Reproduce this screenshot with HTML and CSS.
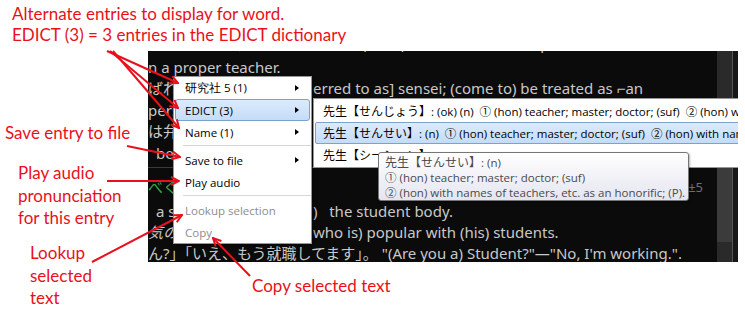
FILE: index.html
```html
<!DOCTYPE html>
<html lang="en">
  <head>
    <meta charset="UTF-8" />
    <meta name="viewport" content="width=device-width, initial-scale=1.0" />
    <title>Popup menu notes</title>
    <link rel="stylesheet" href="styles.css">
  </head>
  <body>
    <div class="page">
      <!-- callouts -->
      <div class="note note-alt">Alternate entries to display for word.<br>EDICT (3) = 3 entries in the EDICT dictionary</div>
      <div class="note note-save">Save entry to file</div>
      <div class="note note-play">Play audio<br>pronunciation<br>for this entry</div>
      <div class="note note-lookup">Lookup<br>selected<br>text</div>
      <div class="note note-copy">Copy selected text</div>

      <!-- screenshot of the reader window -->
      <div class="shot">
        <div class="panel">
          <div class="lines">
            <div class="row row-top full">ことになった先生と呼ばれる人 (were) a teacher; one's superior</div>
            <div class="row full">n a proper teacher.</div>
            <div class="row"><span>ばれる</span><span>erred to as] sensei; (come to) be treated as ⌐an</span></div>
            <div class="row"><span>person</span><span></span></div>
            <div class="row"><span>は弁護士</span><span></span></div>
            <div class="row"><span class="indent">be</span><span></span></div>
            <div class="sep"></div>
            <div class="row row-head"><span class="green">べく</span><span class="count">±5</span></div>
            <div class="row row-low"><span class="indent">a s</span><span>)&nbsp;&nbsp; the student body.</span></div>
            <div class="row row-low"><span class="slant">気のある</span><span>who is) popular with (his) students.</span></div>
            <div class="row row-low full">ん?」「いえ、もう就職してます」。 "(Are you a) Student?"—"No, I'm working.".</div>
          </div>
          <div class="scrollbar"><div class="thumb"></div></div>
          <div class="edge"></div>
        </div>

        <div class="menu">
          <div class="item"><span>研究社 5 (1)</span><i class="tri"></i></div>
          <div class="item active"><span>EDICT (3)</span><i class="tri"></i></div>
          <div class="item"><span>Name (1)</span><i class="tri"></i></div>
          <div class="divider"></div>
          <div class="item"><span>Save to file</span><i class="tri"></i></div>
          <div class="item"><span>Play audio</span></div>
          <div class="divider"></div>
          <div class="item off"><span>Lookup selection</span></div>
          <div class="item off"><span>Copy</span></div>
        </div>

        <div class="submenu">
          <div class="sub-item"><span class="jp">先生【せんじょう】</span>: (ok) (n)&nbsp; ① (hon) teacher; master; doctor; (suf)&nbsp; ② (hon) with names of teachers</div>
          <div class="sub-item active"><span class="jp">先生【せんせい】</span>: (n)&nbsp; ① (hon) teacher; master; doctor; (suf)&nbsp; ② (hon) with names of teachers</div>
          <div class="sub-item"><span class="jp">先生【シーシェン】</span>: (n) (Chinese) Mr.; teacher</div>
        </div>

        <div class="tooltip">
          <div><span class="jp">先生【せんせい】</span>: (n)</div>
          <div>① (hon) teacher; master; doctor; (suf)</div>
          <div>② (hon) with names of teachers, etc. as an honorific; (P).</div>
        </div>
      </div>

      <svg class="arrows" width="745" height="309" viewBox="0 0 745 309">
        <defs>
          <marker id="head" viewBox="0 0 10 10" refX="9" refY="5" markerWidth="10" markerHeight="10" markerUnits="userSpaceOnUse" orient="auto">
            <path d="M1,1 L9,5 L1,9" fill="none" stroke="#e8111b" stroke-width="2" />
          </marker>
        </defs>
        <g stroke="#e8111b" stroke-width="2" fill="none" marker-end="url(#head)">
          <line x1="107" y1="51" x2="178" y2="83" />
          <line x1="110" y1="51" x2="178" y2="108" />
          <line x1="113" y1="51" x2="179" y2="128" />
          <line x1="127" y1="146" x2="180" y2="157" />
          <line x1="107" y1="181" x2="179" y2="181" />
          <line x1="92" y1="262" x2="182" y2="215" />
          <line x1="250" y1="276" x2="213" y2="238" />
        </g>
      </svg>
    </div>
  </body>
</html>
```

FILE: styles.css
```css
/* General */
body {
  margin: 0;
  background-color: #ffffff;
}

.page {
  position: relative;
  width: 745px;
  height: 309px;
  overflow: hidden;
}

/* Red callouts */
.note {
  position: absolute;
  color: #e8111b;
  font-family: "Lato", "Open Sans", sans-serif;
  font-size: 17px;
  line-height: 22.5px;
  white-space: nowrap;
}

.note-alt {
  left: 12px;
  top: 3px;
  line-height: 21px;
}

.note-save {
  left: 5px;
  top: 122px;
}

.note-play {
  left: 18px;
  top: 162px;
}

.note-lookup {
  left: 30px;
  top: 242px;
}

.note-copy {
  left: 252px;
  top: 275px;
}

.arrows {
  position: absolute;
  left: 0;
  top: 0;
}

/* Reader window */
.shot {
  position: absolute;
  left: 148px;
  top: 51px;
  width: 590px;
  height: 211px;
  overflow: hidden;
}

.panel {
  display: flex;
  height: 100%;
  background-color: #0b0b0b;
}

.lines {
  flex: 1;
  overflow: hidden;
  color: #c8c8c8;
  font-family: "Noto Sans", "Noto Sans CJK JP", sans-serif;
  font-size: 15px;
}

.row {
  display: grid;
  grid-template-columns: 165px 1fr;
  height: 21.5px;
  line-height: 21.5px;
  white-space: nowrap;
}

.row > span {
  overflow: hidden;
}

.row.full {
  display: block;
}

.row-top {
  margin-top: -16px;
  line-height: 17px;
}

.row-head {
  height: 25px;
  line-height: 22px;
  grid-template-columns: 1fr auto;
}

.row-low {
  height: 21px;
  line-height: 21px;
}

.indent {
  padding-left: 8px;
}

.slant {
  font-style: italic;
}

.green {
  color: #35a845;
}

.count {
  color: #6f6f6f;
  font-size: 13px;
  padding-right: 14px;
}

.sep {
  height: 1px;
  margin: 3px 0 8px;
  background-color: #3a3a3a;
}

.scrollbar {
  width: 15px;
  background-color: #2a2a2a;
  border-right: 1px solid #565656;
}

.thumb {
  margin-top: 117px;
  height: 74px;
  background-color: #3b3b3b;
}

.edge {
  width: 5px;
  background-color: #171717;
}

/* Context menu */
.menu {
  position: absolute;
  left: 25px;
  top: 25px;
  width: 137px;
  background-color: #ffffff;
  border: 1px solid #979797;
  box-shadow: 2px 2px 3px rgba(0, 0, 0, 0.35);
  font-family: "Open Sans", sans-serif;
  font-size: 11.5px;
  color: #000000;
}

.item {
  display: flex;
  justify-content: space-between;
  align-items: center;
  height: 22px;
  margin: 0 1px;
  padding: 0 10px 0 9px;
  box-sizing: border-box;
  border: 1px solid transparent;
  border-radius: 3px;
}

.item.active {
  background: linear-gradient(#dcebfc, #c4dcf8);
  border-color: #7da2ce;
}

.item.off {
  color: #8d8d8d;
}

.tri {
  width: 0;
  height: 0;
  border-left: 4px solid #000000;
  border-top: 3.5px solid transparent;
  border-bottom: 3.5px solid transparent;
}

.divider {
  height: 1px;
  margin: 2px 0 2px 9px;
  background-color: #d7d7d7;
  border-bottom: 1px solid #ffffff;
}

/* Submenu with EDICT entries */
.submenu {
  position: absolute;
  left: 165px;
  top: 47px;
  width: 520px;
  padding: 1px 0;
  background-color: #ffffff;
  border: 1px solid #979797;
  font-family: "Open Sans", "Noto Sans CJK JP", sans-serif;
  font-size: 11.5px;
  color: #000000;
  white-space: nowrap;
}

.sub-item {
  height: 22px;
  line-height: 20px;
  margin: 0 1px;
  padding: 0 7px;
  box-sizing: border-box;
  border: 1px solid transparent;
  border-radius: 2px;
}

.sub-item.active {
  background: linear-gradient(#dcebfc, #c4dcf8);
  border-color: #7da2ce;
}

.jp {
  font-family: "Noto Sans CJK JP", sans-serif;
  font-size: 12px;
}

/* Tooltip */
.tooltip {
  position: absolute;
  left: 230px;
  top: 101px;
  width: 311px;
  height: 49px;
  box-sizing: border-box;
  padding: 1px 6px 0;
  background: linear-gradient(#ffffff, #e4e5f0);
  border: 1px solid #767676;
  border-radius: 3px;
  box-shadow: 1px 1px 2px rgba(0, 0, 0, 0.3);
  font-family: "Open Sans", "Noto Sans CJK JP", sans-serif;
  font-size: 11.5px;
  line-height: 15px;
  color: #4a4a4a;
  white-space: nowrap;
}
```
